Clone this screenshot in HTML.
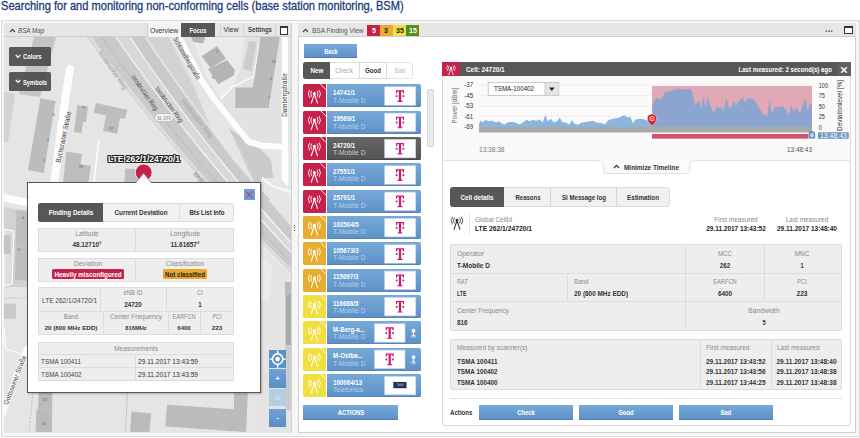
<!DOCTYPE html>
<html><head><meta charset="utf-8"><title>BSM</title>
<style>
html,body{margin:0;padding:0;background:#fff;}
body{position:relative;width:860px;height:438px;overflow:hidden;font-family:"Liberation Sans",sans-serif;}
.b{position:absolute;box-sizing:border-box;}
.t{position:absolute;display:inline-block;white-space:nowrap;line-height:10px;}
svg{position:absolute;overflow:visible;}
</style></head><body>

<span class="t" style="top:1.50px;font-size:13px;color:#1a3a7c;left:0.80px;transform-origin:0 50%;transform:scaleX(0.852);line-height:14px;top:-1px;-webkit-text-stroke:0.3px #1a3a7c;">Searching for and monitoring non-conforming cells (base station monitoring, BSM)</span>
<div class="b" style="left:1.00px;top:20.00px;width:858.50px;height:416.50px;background:#f6f6f6;border:1px solid #d9d9d9;"></div>
<div class="b" style="left:3.50px;top:22.50px;width:288.00px;height:410.00px;background:#e4e4e4;border:1px solid #d4d4d4;"></div>
<div class="b" style="left:4.00px;top:23.00px;width:287.00px;height:14.00px;background:#e6e6e6;border-bottom:1px solid #cfcfcf;"></div>
<svg style="left:4px;top:37px;overflow:hidden" width="287" height="395.5" viewBox="4 37 287 395.5">
<rect x="0" y="30" width="300" height="410" fill="#e5e5e5"/>
<polygon points="34.0,37.0 56.0,37.0 40.0,97.0 19.0,94.0" fill="#c4c4c4" />
<polygon points="4.0,92.0 15.0,94.0 8.0,142.0 4.0,142.0" fill="#d2d2d2" />
<polygon points="79.6,30.0 86.9,40.0 94.3,50.0 101.7,60.0 109.3,70.0 117.1,80.0 124.9,90.0 132.9,100.0 141.0,110.0 149.2,120.0 157.5,130.0 165.9,140.0 174.5,150.0 183.2,160.0 192.0,170.0 200.9,180.0 210.0,190.0 219.1,200.0 228.4,210.0 237.8,220.0 247.4,230.0 257.0,240.0 266.8,250.0 276.7,260.0 286.7,270.0 296.8,280.0 307.0,290.0 317.4,300.0 340.0,275.0 291.0,223.0 262.0,192.0 252.0,181.0 230.0,155.0 212.0,130.0 204.0,110.0 195.0,87.0 182.0,62.0 169.5,37.0 166.0,30.0" fill="#cacaca" />
<polygon points="79.6,30.0 86.9,40.0 94.3,50.0 101.7,60.0 109.3,70.0 117.1,80.0 124.9,90.0 132.9,100.0 141.0,110.0 149.2,120.0 157.5,130.0 165.9,140.0 174.5,150.0 183.2,160.0 192.0,170.0 200.9,180.0 210.0,190.0 219.1,200.0 228.4,210.0 237.8,220.0 247.4,230.0 257.0,240.0 266.8,250.0 276.7,260.0 286.7,270.0 296.8,280.0 307.0,290.0 317.4,300.0 322.3,300.0 312.0,290.0 301.8,280.0 291.7,270.0 281.7,260.0 271.9,250.0 262.2,240.0 252.6,230.0 243.1,220.0 233.8,210.0 224.5,200.0 215.4,190.0 206.4,180.0 197.5,170.0 188.8,160.0 180.1,150.0 171.6,140.0 163.2,130.0 155.0,120.0 146.8,110.0 138.8,100.0 130.9,90.0 123.1,80.0 115.4,70.0 107.8,60.0 100.4,50.0 93.1,40.0 85.9,30.0" fill="#d8d8d8" />
<polygon points="111.2,30.0 118.1,40.0 125.0,50.0 132.0,60.0 139.2,70.0 146.5,80.0 153.9,90.0 161.5,100.0 169.1,110.0 176.9,120.0 184.8,130.0 192.8,140.0 201.0,150.0 209.2,160.0 217.6,170.0 226.1,180.0 234.7,190.0 243.4,200.0 252.3,210.0 261.3,220.0 270.4,230.0 279.6,240.0 288.9,250.0 298.4,260.0 307.9,270.0 317.6,280.0 327.5,290.0 337.4,300.0 345.1,300.0 335.4,290.0 325.8,280.0 316.4,270.0 307.0,260.0 297.8,250.0 288.7,240.0 279.7,230.0 270.9,220.0 262.1,210.0 253.5,200.0 245.0,190.0 236.6,180.0 228.4,170.0 220.3,160.0 212.2,150.0 204.3,140.0 196.6,130.0 188.9,120.0 181.4,110.0 174.0,100.0 166.7,90.0 159.5,80.0 152.4,70.0 145.5,60.0 138.7,50.0 132.0,40.0 125.4,30.0" fill="#d8d8d8" />
<polygon points="140.7,30.0 147.3,40.0 154.0,50.0 160.9,60.0 167.9,70.0 175.0,80.0 182.2,90.0 189.5,100.0 197.0,110.0 204.5,120.0 212.2,130.0 220.1,140.0 228.0,150.0 236.0,160.0 244.2,170.0 252.5,180.0 260.9,190.0 269.5,200.0 278.1,210.0 286.9,220.0 295.8,230.0 304.8,240.0 314.0,250.0 323.2,260.0 332.6,270.0 342.1,280.0 351.7,290.0 361.4,300.0 340.0,275.0 291.0,223.0 262.0,192.0 252.0,181.0 230.0,155.0 212.0,130.0 204.0,110.0 195.0,87.0 182.0,62.0 169.5,37.0 166.0,30.0" fill="#d2d2d2" />
<polyline points="79.6,30.0 86.9,40.0 94.3,50.0 101.7,60.0 109.3,70.0 117.1,80.0 124.9,90.0 132.9,100.0 141.0,110.0 149.2,120.0 157.5,130.0 165.9,140.0 174.5,150.0 183.2,160.0 192.0,170.0 200.9,180.0 210.0,190.0 219.1,200.0 228.4,210.0 237.8,220.0 247.4,230.0 257.0,240.0 266.8,250.0 276.7,260.0 286.7,270.0 296.8,280.0 307.0,290.0 317.4,300.0" fill="none" stroke="#f4f4f4" stroke-width="1.6" />
<polyline points="79.6,30.0 86.9,40.0 94.3,50.0 101.7,60.0 109.3,70.0 117.1,80.0 124.9,90.0 132.9,100.0 141.0,110.0 149.2,120.0 157.5,130.0 165.9,140.0 174.5,150.0 183.2,160.0 192.0,170.0 200.9,180.0 210.0,190.0 219.1,200.0 228.4,210.0 237.8,220.0 247.4,230.0 257.0,240.0 266.8,250.0 276.7,260.0 286.7,270.0 296.8,280.0 307.0,290.0 317.4,300.0" fill="none" stroke="#999" stroke-width="0.5" stroke-dasharray="1 1.2"/>
<polyline points="85.9,30.0 93.1,40.0 100.4,50.0 107.8,60.0 115.4,70.0 123.1,80.0 130.9,90.0 138.8,100.0 146.8,110.0 155.0,120.0 163.2,130.0 171.6,140.0 180.1,150.0 188.8,160.0 197.5,170.0 206.4,180.0 215.4,190.0 224.5,200.0 233.8,210.0 243.1,220.0 252.6,230.0 262.2,240.0 271.9,250.0 281.7,260.0 291.7,270.0 301.8,280.0 312.0,290.0 322.3,300.0" fill="none" stroke="#eee" stroke-width="0.8" />
<polyline points="97.0,30.0 104.0,40.0 111.2,50.0 118.4,60.0 125.8,70.0 133.3,80.0 141.0,90.0 148.7,100.0 156.6,110.0 164.5,120.0 172.7,130.0 180.9,140.0 189.2,150.0 197.7,160.0 206.3,170.0 215.0,180.0 223.8,190.0 232.8,200.0 241.8,210.0 251.0,220.0 260.3,230.0 269.7,240.0 279.3,250.0 289.0,260.0 298.7,270.0 308.6,280.0 318.7,290.0 328.8,300.0" fill="none" stroke="#aaa" stroke-width="0.5" />
<polyline points="111.2,30.0 118.1,40.0 125.0,50.0 132.0,60.0 139.2,70.0 146.5,80.0 153.9,90.0 161.5,100.0 169.1,110.0 176.9,120.0 184.8,130.0 192.8,140.0 201.0,150.0 209.2,160.0 217.6,170.0 226.1,180.0 234.7,190.0 243.4,200.0 252.3,210.0 261.3,220.0 270.4,230.0 279.6,240.0 288.9,250.0 298.4,260.0 307.9,270.0 317.6,280.0 327.5,290.0 337.4,300.0" fill="none" stroke="#f6f6f6" stroke-width="1.2" />
<polyline points="125.4,30.0 132.0,40.0 138.7,50.0 145.5,60.0 152.4,70.0 159.5,80.0 166.7,90.0 174.0,100.0 181.4,110.0 188.9,120.0 196.6,130.0 204.3,140.0 212.2,150.0 220.3,160.0 228.4,170.0 236.6,180.0 245.0,190.0 253.5,200.0 262.1,210.0 270.9,220.0 279.7,230.0 288.7,240.0 297.8,250.0 307.0,260.0 316.4,270.0 325.8,280.0 335.4,290.0 345.1,300.0" fill="none" stroke="#f6f6f6" stroke-width="1.2" />
<polyline points="140.7,30.0 147.3,40.0 154.0,50.0 160.9,60.0 167.9,70.0 175.0,80.0 182.2,90.0 189.5,100.0 197.0,110.0 204.5,120.0 212.2,130.0 220.1,140.0 228.0,150.0 236.0,160.0 244.2,170.0 252.5,180.0 260.9,190.0 269.5,200.0 278.1,210.0 286.9,220.0 295.8,230.0 304.8,240.0 314.0,250.0 323.2,260.0 332.6,270.0 342.1,280.0 351.7,290.0 361.4,300.0" fill="none" stroke="#f4f4f4" stroke-width="1.4" />
<polyline points="140.7,30.0 147.3,40.0 154.0,50.0 160.9,60.0 167.9,70.0 175.0,80.0 182.2,90.0 189.5,100.0 197.0,110.0 204.5,120.0 212.2,130.0 220.1,140.0 228.0,150.0 236.0,160.0 244.2,170.0 252.5,180.0 260.9,190.0 269.5,200.0 278.1,210.0 286.9,220.0 295.8,230.0 304.8,240.0 314.0,250.0 323.2,260.0 332.6,270.0 342.1,280.0 351.7,290.0 361.4,300.0" fill="none" stroke="#999" stroke-width="0.5" stroke-dasharray="1 1.2"/>
<polyline points="166.0,30.0 169.5,37.0 182.0,62.0 195.0,87.0 204.0,110.0 212.0,130.0 230.0,155.0 252.0,181.0 262.0,192.0 291.0,223.0 340.0,275.0" fill="none" stroke="#f0f0f0" stroke-width="1.4" />
<polyline points="166.0,30.0 169.5,37.0 182.0,62.0 195.0,87.0 204.0,110.0 212.0,130.0 230.0,155.0 252.0,181.0 262.0,192.0 291.0,223.0 340.0,275.0" fill="none" stroke="#999" stroke-width="0.5" stroke-dasharray="1 1.2"/>
<polygon points="172.0,30.0 300.0,30.0 300.0,146.0 250.0,142.0 232.0,120.0 213.5,98.0 201.5,80.0 191.5,60.0" fill="#e2e2e2" />
<polygon points="192.0,37.0 245.0,37.0 240.0,70.0 232.0,88.0 221.0,99.0 205.0,75.0" fill="#ebebeb" />
<polygon points="229.0,128.0 249.0,142.0 260.0,148.4 271.0,160.0 276.0,200.0 262.0,200.0 254.0,182.0" fill="#cacaca" />
<polyline points="236.0,139.6 255.0,181.0" fill="none" stroke="#e2e2e2" stroke-width="0.7" stroke-dasharray="1 1"/>
<polyline points="177.0,30.0 180.0,37.0 191.5,60.0 201.5,80.0" fill="none" stroke="#fdfdfd" stroke-width="4.6" stroke-linejoin="round"/>
<polyline points="191.5,60.0 201.5,80.0 213.5,98.0 231.0,120.0 249.0,142.0 262.0,145.5 284.0,147.0" fill="none" stroke="#fdfdfd" stroke-width="6" stroke-linejoin="round"/>
<polyline points="285.0,30.0 285.0,186.0" fill="none" stroke="#fdfdfd" stroke-width="6.5" />
<polyline points="221.0,99.0 232.3,87.0 254.0,76.6 259.2,44.7 262.0,36.0" fill="none" stroke="#fff" stroke-width="1.2" />
<polygon points="191.4,37.0 205.5,37.0 203.0,43.4 193.0,42.0" fill="#b5b5b5" />
<polygon points="201.6,56.2 217.0,46.0 226.0,58.7 210.6,67.7" fill="#b5b5b5" />
<polygon points="208.0,69.0 227.2,60.0 234.9,70.3 233.6,75.4 218.3,84.3" fill="#b5b5b5" />
<polygon points="249.0,40.8 256.6,42.0 251.5,71.5 242.6,69.0" fill="#cdcdcd" />
<polygon points="260.5,37.0 279.8,37.0 268.7,108.0 235.3,108.0 235.3,87.4 252.9,87.4" fill="#b9b9b9" />
<polyline points="70.0,69.0 65.5,97.6 54.0,184.0" fill="none" stroke="#fdfdfd" stroke-width="8" stroke-linecap="round" stroke-linejoin="round"/>
<polyline points="99.0,139.0 94.0,182.0" fill="none" stroke="#fff" stroke-width="1.4" />
<polygon points="40.4,98.3 55.5,101.0 43.8,173.0 28.0,170.0" fill="#bcbcbc" />
<polygon points="77.5,105.0 88.0,106.5 86.0,122.0 83.0,122.0 81.5,133.0 74.0,132.0" fill="#bdbdbd" />
<polygon points="96.0,103.0 127.5,110.0 124.5,119.0 120.0,118.0 117.0,134.0 103.0,131.0 106.0,115.5 93.5,112.5" fill="#bdbdbd" />
<polygon points="66.5,151.5 82.0,154.0 80.5,164.0 91.0,166.0 88.5,182.0 63.0,182.0" fill="#bdbdbd" />
<polygon points="125.5,168.5 139.0,169.5 137.5,184.0 124.0,184.0" fill="#bdbdbd" />
<polygon points="4.0,207.0 27.0,211.0 27.0,287.0 4.0,287.0" fill="#d2d2d2" />
<polyline points="2.0,197.5 30.0,203.0" fill="none" stroke="#fdfdfd" stroke-width="7.5" />
<polygon points="16.4,210.0 27.0,211.0 27.0,281.0 15.0,279.0" fill="#bebebe" />
<polygon points="4.0,229.0 14.0,231.0 12.0,284.0 4.0,286.0" fill="#dedede" stroke="#fff" stroke-width="1"/>
<polygon points="4.0,235.0 11.0,235.5 10.5,254.0 4.0,254.0" fill="#c4c4c4" />
<polyline points="16.0,246.0 27.0,246.0" fill="none" stroke="#d0d0d0" stroke-width="0.6" />
<polyline points="4.0,298.0 27.0,298.0" fill="none" stroke="#aaa" stroke-width="0.6" stroke-dasharray="2 1.5"/>
<polygon points="4.0,303.7 16.0,303.7 16.0,318.8 4.0,318.8" fill="#c9c9c9" />
<polyline points="4.0,328.0 6.0,349.0 22.0,354.4 27.0,345.0" fill="none" stroke="#fff" stroke-width="1" />
<polyline points="27.5,347.0 24.4,355.8 6.8,401.8 -2.0,428.0" fill="none" stroke="#fdfdfd" stroke-width="5.8" />
<polyline points="33.0,393.0 29.0,432.0" fill="none" stroke="#999" stroke-width="0.5" stroke-dasharray="2 1.5"/>
<polygon points="38.5,393.0 52.3,393.0 52.0,432.0 35.5,432.0 36.5,409.5 38.0,409.5" fill="#bbbbbb" />
<polyline points="36.5,409.6 52.0,409.6" fill="none" stroke="#ccc" stroke-width="0.6" />
<polyline points="127.4,393.0 125.5,432.0" fill="none" stroke="#aaa" stroke-width="0.5" />
<polygon points="131.5,411.5 151.0,413.5 149.5,432.0 130.2,432.0" fill="#bbbbbb" />
<polygon points="167.0,404.8 234.0,409.3 234.0,393.0 247.8,393.0 246.0,432.0 230.6,431.0 165.2,426.5" fill="#bbbbbb" />
<polygon points="261.0,250.0 291.0,275.0 291.0,432.0 261.0,432.0" fill="#e4e4e4" />
<polygon points="261.0,257.0 272.0,266.0 270.0,300.0 261.0,300.0" fill="#ececec" />
<polygon points="285.0,282.0 291.0,282.0 291.0,295.0 285.0,295.0" fill="#bcbcbc" />
<polygon points="261.0,178.0 280.0,178.0 291.0,190.0 291.0,221.0 262.0,191.0" fill="#e6e6e6" />
<polyline points="262.0,178.0 272.0,186.0 291.0,192.0" fill="none" stroke="#f8f8f8" stroke-width="2.5" />
<polygon points="285.5,295.0 291.0,295.0 291.0,345.0 285.5,345.0" fill="#aaaaaa" />
<polygon points="285.5,345.0 291.0,345.0 291.0,410.0 285.5,410.0" fill="#cccccc" />
<text x="184.9" y="59.5" font-family="Liberation Sans, sans-serif" font-size="7" fill="#3a3a3a" text-anchor="middle" transform="rotate(59.7 184.9 59.5)" textLength="47.6" lengthAdjust="spacingAndGlyphs">Schlüsselbergstraße</text>
<text x="111.0" y="71.4" font-family="Liberation Sans, sans-serif" font-size="7" fill="#a4a4a4" text-anchor="middle" transform="rotate(55.7 111.0 71.4)" textLength="45.6" lengthAdjust="spacingAndGlyphs">Innsbrucker Ring</text>
<text x="142.8" y="93.9" font-family="Liberation Sans, sans-serif" font-size="7" fill="#4a4a4a" text-anchor="middle" transform="rotate(55 142.8 93.9)" textLength="41.8" lengthAdjust="spacingAndGlyphs">Innsbrucker Ring</text>
<text x="167.3" y="105.9" font-family="Liberation Sans, sans-serif" font-size="7" fill="#4a4a4a" text-anchor="middle" transform="rotate(53.9 167.3 105.9)" textLength="42.4" lengthAdjust="spacingAndGlyphs">Innsbrucker Ring</text>
<text x="195.1" y="119.7" font-family="Liberation Sans, sans-serif" font-size="7" fill="#a4a4a4" text-anchor="middle" transform="rotate(52.3 195.1 119.7)" textLength="47.6" lengthAdjust="spacingAndGlyphs">Innsbrucker Ring</text>
<text x="197.2" y="179.1" font-family="Liberation Sans, sans-serif" font-size="7" fill="#777" text-anchor="middle" transform="rotate(48 197.2 179.1)" textLength="13" lengthAdjust="spacingAndGlyphs">Innsb</text>
<text x="65.7" y="137.5" font-family="Liberation Sans, sans-serif" font-size="7" fill="#3a3a3a" text-anchor="middle" transform="rotate(-78 65.7 137.5)" textLength="52" lengthAdjust="spacingAndGlyphs">Buchsrainer Straße</text>
<text x="287.4" y="95.0" font-family="Liberation Sans, sans-serif" font-size="7" fill="#3a3a3a" text-anchor="middle" transform="rotate(-90 287.4 95.0)" textLength="43.5" lengthAdjust="spacingAndGlyphs">Dambergstraße</text>
<text x="17.1" y="380.9" font-family="Liberation Sans, sans-serif" font-size="7" fill="#3a3a3a" text-anchor="middle" transform="rotate(-69 17.1 380.9)" textLength="52" lengthAdjust="spacingAndGlyphs">Gottsseiner Straße</text>
<rect x="154.8" y="113.6" width="18.6" height="8" rx="4" fill="#f4f4f4" stroke="#aaa" stroke-width="0.6"/>
<text x="164.2" y="120.0" font-family="Liberation Sans, sans-serif" font-size="6" fill="#aaa" text-anchor="middle" transform="rotate(0 164.2 120.0)" font-weight="700">B 2R</text>
<text x="83.7" y="109.0" font-family="Liberation Sans, sans-serif" font-size="4.2" fill="#666" text-anchor="middle" transform="rotate(0 83.7 109.0)" >8</text>
<text x="111.0" y="130.0" font-family="Liberation Sans, sans-serif" font-size="4.2" fill="#666" text-anchor="middle" transform="rotate(0 111.0 130.0)" >37</text>
<text x="81.0" y="168.0" font-family="Liberation Sans, sans-serif" font-size="4.2" fill="#666" text-anchor="middle" transform="rotate(0 81.0 168.0)" >33</text>
<text x="53.5" y="116.0" font-family="Liberation Sans, sans-serif" font-size="4.2" fill="#666" text-anchor="middle" transform="rotate(0 53.5 116.0)" >5</text>
<text x="47.8" y="140.5" font-family="Liberation Sans, sans-serif" font-size="4.2" fill="#666" text-anchor="middle" transform="rotate(0 47.8 140.5)" >3</text>
<text x="43.8" y="162.0" font-family="Liberation Sans, sans-serif" font-size="4.2" fill="#666" text-anchor="middle" transform="rotate(0 43.8 162.0)" >1</text>
<text x="217.0" y="53.0" font-family="Liberation Sans, sans-serif" font-size="4.2" fill="#666" text-anchor="middle" transform="rotate(0 217.0 53.0)" >7</text>
<text x="213.0" y="79.0" font-family="Liberation Sans, sans-serif" font-size="4.2" fill="#666" text-anchor="middle" transform="rotate(0 213.0 79.0)" >9</text>
<text x="274.0" y="63.0" font-family="Liberation Sans, sans-serif" font-size="4.2" fill="#666" text-anchor="middle" transform="rotate(0 274.0 63.0)" >11</text>
<text x="271.0" y="80.0" font-family="Liberation Sans, sans-serif" font-size="4.2" fill="#666" text-anchor="middle" transform="rotate(0 271.0 80.0)" >9</text>
<text x="269.0" y="99.0" font-family="Liberation Sans, sans-serif" font-size="4.2" fill="#666" text-anchor="middle" transform="rotate(0 269.0 99.0)" >7</text>
<text x="44.5" y="400.5" font-family="Liberation Sans, sans-serif" font-size="4.2" fill="#666" text-anchor="middle" transform="rotate(0 44.5 400.5)" >13</text>
<text x="43.5" y="424.5" font-family="Liberation Sans, sans-serif" font-size="4.2" fill="#666" text-anchor="middle" transform="rotate(0 43.5 424.5)" >15</text>
<text x="19.0" y="251.0" font-family="Liberation Sans, sans-serif" font-size="4.2" fill="#666" text-anchor="middle" transform="rotate(0 19.0 251.0)" >6</text>
<text x="23.0" y="219.0" font-family="Liberation Sans, sans-serif" font-size="4.2" fill="#666" text-anchor="middle" transform="rotate(0 23.0 219.0)" >4</text>
</svg>
<svg style="left:8.8px;top:28px" width="7" height="5" viewBox="0 0 7 5"><path d="M1 4 L3.5 1.3 L6 4" fill="none" stroke="#444" stroke-width="1.2"/></svg>
<span class="t" style="top:26.00px;font-size:6.8px;color:#505050;left:17.80px;transform-origin:0 50%;transform:scaleX(0.917);font-style:italic;">BSA Map</span>
<div class="b" style="left:146.50px;top:23.00px;width:34.50px;height:14.00px;background:#f4f4f4;border-left:1px solid #ccc;"></div>
<span class="t" style="top:26.20px;font-size:7px;color:#333;left:163.70px;transform-origin:50% 50%;transform:translateX(-50%) scaleX(0.960);">Overview</span>
<div class="b" style="left:181.00px;top:23.00px;width:34.00px;height:14.00px;background:#575757;"></div>
<span class="t" style="top:26.20px;font-size:7px;color:#fff;font-weight:700;left:198.00px;transform-origin:50% 50%;transform:translateX(-50%) scaleX(0.825);">Focus</span>
<div class="b" style="left:220.00px;top:23.00px;width:24.00px;height:14.00px;border-left:1px solid #d2d2d2;border-right:1px solid #d2d2d2;"></div>
<span class="t" style="top:25.00px;font-size:7px;color:#333;left:230.50px;transform-origin:50% 50%;transform:translateX(-50%) scaleX(0.997);">View</span>
<div class="b" style="left:244.00px;top:23.00px;width:31.50px;height:14.00px;border-right:1px solid #d2d2d2;"></div>
<span class="t" style="top:25.00px;font-size:7px;color:#444;font-weight:700;left:260.00px;transform-origin:50% 50%;transform:translateX(-50%) scaleX(0.869);">Settings</span>
<div class="b" style="left:279.50px;top:26.00px;width:8.50px;height:8.50px;border:1px solid #333;border-top:2.5px solid #333;background:#fff;"></div>
<div class="b" style="left:9.00px;top:47.00px;width:41.50px;height:19.00px;background:rgba(70,70,70,0.88);border-radius:1.5px;"></div>
<svg style="left:14.5px;top:54.0px" width="6" height="5" viewBox="0 0 6 5"><path d="M0.8 1 L3 3.4 L5.2 1" fill="none" stroke="#fff" stroke-width="1.2"/></svg>
<span class="t" style="top:52.40px;font-size:7px;color:#fff;font-weight:700;left:23.00px;transform-origin:0 50%;transform:scaleX(0.835);">Colors</span>
<div class="b" style="left:9.00px;top:72.30px;width:41.50px;height:19.00px;background:rgba(70,70,70,0.88);border-radius:1.5px;"></div>
<svg style="left:14.5px;top:79.3px" width="6" height="5" viewBox="0 0 6 5"><path d="M0.8 1 L3 3.4 L5.2 1" fill="none" stroke="#fff" stroke-width="1.2"/></svg>
<span class="t" style="top:77.70px;font-size:7px;color:#fff;font-weight:700;left:23.00px;transform-origin:0 50%;transform:scaleX(0.823);">Symbols</span>
<svg style="left:0;top:0" width="860" height="438" viewBox="0 0 860 438"><circle cx="143.7" cy="172.5" r="8.4" fill="#c5214b" stroke="#fff" stroke-width="0.8"/></svg>
<span class="t" style="top:154.30px;font-size:8.5px;color:#fff;font-weight:700;left:144.00px;transform-origin:50% 50%;transform:translateX(-50%) scaleX(0.998);text-shadow:-1px 0 #222,1px 0 #222,0 -1px #222,0 1px #222,-1px -1px #222,1px 1px #222,1px -1px #222,-1px 1px #222;">LTE 262/1/24720/1</span>
<div class="b" style="left:27.00px;top:182.30px;width:234.00px;height:210.70px;background:#fff;border:1px solid #555;box-shadow:1px 1px 2px rgba(0,0,0,.25);"></div>
<svg style="left:0;top:0" width="860" height="438" viewBox="0 0 860 438"><path d="M135.5 183.6 L143.7 173.2 L151.5 183.6 Z" fill="#fff"/><path d="M135.5 183 L143.7 173.2 L151.5 183" fill="none" stroke="#777" stroke-width="0.7"/></svg>
<div class="b" style="left:244.30px;top:188.60px;width:10.50px;height:11.20px;background:#6d9fd6;"></div>
<svg style="left:244.3px;top:188.6px" width="10.5" height="11.2" viewBox="0 0 10.5 11.2"><path d="M2 2.4 L8.5 8.9 M8.5 2.4 L2 8.9" stroke="#b8405e" stroke-width="1.1"/></svg>
<div class="b" style="left:38.20px;top:202.80px;width:195.80px;height:19.00px;background:#f1f1f1;border:1px solid #ddd;border-radius:2.5px;"></div>
<div class="b" style="left:38.20px;top:202.80px;width:65.30px;height:19.00px;background:#575757;border-radius:2.5px 0 0 2.5px;"></div>
<div class="b" style="left:178.80px;top:202.80px;width:0.70px;height:19.00px;background:#ddd;"></div>
<span class="t" style="top:207.50px;font-size:7px;color:#fff;font-weight:700;left:71.00px;transform-origin:50% 50%;transform:translateX(-50%) scaleX(0.887);">Finding Details</span>
<span class="t" style="top:207.50px;font-size:7px;color:#333;font-weight:700;left:141.00px;transform-origin:50% 50%;transform:translateX(-50%) scaleX(0.902);">Current Deviation</span>
<span class="t" style="top:207.50px;font-size:7px;color:#333;font-weight:700;left:206.50px;transform-origin:50% 50%;transform:translateX(-50%) scaleX(0.866);">Bts List Info</span>
<div class="b" style="left:38.20px;top:228.30px;width:195.80px;height:24.00px;background:#eeeeee;border:1px solid #dcdcdc;"></div>
<div class="b" style="left:135.00px;top:228.30px;width:0.70px;height:24.00px;background:#dcdcdc;"></div>
<span class="t" style="top:229.30px;font-size:6.5px;color:#8a8a8a;left:87.00px;transform-origin:50% 50%;transform:translateX(-50%) scaleX(1.016);">Latitude</span>
<span class="t" style="top:240.00px;font-size:6.5px;color:#333;font-weight:700;left:87.00px;transform-origin:50% 50%;transform:translateX(-50%) scaleX(0.976);">48.12710°</span>
<span class="t" style="top:229.30px;font-size:6.5px;color:#8a8a8a;left:184.50px;transform-origin:50% 50%;transform:translateX(-50%) scaleX(1.051);">Longitude</span>
<span class="t" style="top:240.00px;font-size:6.5px;color:#333;font-weight:700;left:184.50px;transform-origin:50% 50%;transform:translateX(-50%) scaleX(0.988);">11.61657°</span>
<div class="b" style="left:38.20px;top:257.70px;width:195.80px;height:24.50px;background:#eeeeee;border:1px solid #dcdcdc;"></div>
<div class="b" style="left:135.00px;top:257.70px;width:0.70px;height:24.50px;background:#dcdcdc;"></div>
<span class="t" style="top:258.80px;font-size:7px;color:#8a8a8a;left:87.80px;transform-origin:50% 50%;transform:translateX(-50%) scaleX(0.977);">Deviation</span>
<span class="t" style="top:258.80px;font-size:7px;color:#8a8a8a;left:184.50px;transform-origin:50% 50%;transform:translateX(-50%) scaleX(0.934);">Classification</span>
<div class="b" style="left:52.30px;top:269.20px;width:71.40px;height:10.20px;background:#c5214b;border-radius:1.5px;"></div>
<span class="t" style="top:269.50px;font-size:7px;color:#fff;font-weight:700;left:88.00px;transform-origin:50% 50%;transform:translateX(-50%) scaleX(0.897);">Heavily misconfigured</span>
<div class="b" style="left:162.80px;top:269.20px;width:43.90px;height:10.20px;background:#e8a92a;border-radius:1.5px;"></div>
<span class="t" style="top:269.50px;font-size:7px;color:#222;font-weight:700;left:184.80px;transform-origin:50% 50%;transform:translateX(-50%) scaleX(0.879);">Not classified</span>
<div class="b" style="left:38.20px;top:287.00px;width:195.80px;height:48.30px;background:#eeeeee;border:1px solid #dcdcdc;"></div>
<div class="b" style="left:38.20px;top:311.00px;width:195.80px;height:0.70px;background:#dcdcdc;"></div>
<div class="b" style="left:99.50px;top:287.00px;width:0.70px;height:24.00px;background:#dcdcdc;"></div>
<div class="b" style="left:166.00px;top:287.00px;width:0.70px;height:24.00px;background:#dcdcdc;"></div>
<div class="b" style="left:103.30px;top:311.50px;width:0.70px;height:23.80px;background:#dcdcdc;"></div>
<div class="b" style="left:168.20px;top:311.50px;width:0.70px;height:23.80px;background:#dcdcdc;"></div>
<div class="b" style="left:200.00px;top:311.50px;width:0.70px;height:23.80px;background:#dcdcdc;"></div>
<span class="t" style="top:295.50px;font-size:6.5px;color:#444;left:41.50px;transform-origin:0 50%;transform:scaleX(1.004);">LTE 262/1/24720/1</span>
<span class="t" style="top:288.30px;font-size:6.5px;color:#8a8a8a;left:133.00px;transform-origin:50% 50%;transform:translateX(-50%) scaleX(0.907);">eNB ID</span>
<span class="t" style="top:299.50px;font-size:7px;color:#333;font-weight:700;left:133.00px;transform-origin:50% 50%;transform:translateX(-50%) scaleX(0.899);">24720</span>
<span class="t" style="top:288.30px;font-size:6.5px;color:#8a8a8a;left:200.00px;transform-origin:50% 50%;transform:translateX(-50%) scaleX(0.846);">CI</span>
<span class="t" style="top:299.50px;font-size:7px;color:#333;font-weight:700;left:200.00px;transform-origin:50% 50%;transform:translateX(-50%) scaleX(0.880);">1</span>
<span class="t" style="top:311.80px;font-size:6.5px;color:#8a8a8a;left:71.00px;transform-origin:50% 50%;transform:translateX(-50%) scaleX(0.955);">Band</span>
<span class="t" style="top:323.00px;font-size:6.2px;color:#333;font-weight:700;left:71.00px;transform-origin:50% 50%;transform:translateX(-50%) scaleX(1.012);">20 (800 MHz EDD)</span>
<span class="t" style="top:311.80px;font-size:6.5px;color:#8a8a8a;left:136.00px;transform-origin:50% 50%;transform:translateX(-50%) scaleX(1.000);">Center Frequency</span>
<span class="t" style="top:323.00px;font-size:6.2px;color:#333;font-weight:700;left:136.00px;transform-origin:50% 50%;transform:translateX(-50%) scaleX(0.931);">816MHz</span>
<span class="t" style="top:311.80px;font-size:6.5px;color:#8a8a8a;left:184.00px;transform-origin:50% 50%;transform:translateX(-50%) scaleX(0.861);">EARFCN</span>
<span class="t" style="top:323.00px;font-size:6.2px;color:#333;font-weight:700;left:184.00px;transform-origin:50% 50%;transform:translateX(-50%) scaleX(0.979);">6400</span>
<span class="t" style="top:311.80px;font-size:6.5px;color:#8a8a8a;left:217.00px;transform-origin:50% 50%;transform:translateX(-50%) scaleX(0.831);">PCI</span>
<span class="t" style="top:323.00px;font-size:6.2px;color:#333;font-weight:700;left:217.00px;transform-origin:50% 50%;transform:translateX(-50%) scaleX(1.015);">223</span>
<div class="b" style="left:38.20px;top:341.80px;width:195.80px;height:39.20px;background:#eeeeee;border:1px solid #dcdcdc;"></div>
<div class="b" style="left:38.20px;top:354.30px;width:195.80px;height:0.70px;background:#dcdcdc;"></div>
<div class="b" style="left:38.20px;top:367.30px;width:195.80px;height:0.70px;background:#dcdcdc;"></div>
<div class="b" style="left:135.00px;top:354.30px;width:0.70px;height:26.70px;background:#dcdcdc;"></div>
<span class="t" style="top:344.10px;font-size:6.5px;color:#8a8a8a;left:136.00px;transform-origin:50% 50%;transform:translateX(-50%) scaleX(1.024);">Measurements</span>
<span class="t" style="top:356.90px;font-size:6.8px;color:#444;left:41.00px;transform-origin:0 50%;transform:scaleX(0.939);">TSMA 100411</span>
<span class="t" style="top:369.90px;font-size:6.8px;color:#444;left:41.00px;transform-origin:0 50%;transform:scaleX(0.940);">TSMA 100402</span>
<span class="t" style="top:356.90px;font-size:6.8px;color:#333;left:138.00px;transform-origin:0 50%;transform:scaleX(0.970);">29.11.2017 13:43:59</span>
<span class="t" style="top:369.90px;font-size:6.8px;color:#333;left:138.00px;transform-origin:0 50%;transform:scaleX(0.970);">29.11.2017 13:43:59</span>
<div class="b" style="left:268.80px;top:350.00px;width:17.60px;height:18.40px;background:#5d91cc;"></div>
<svg style="left:269px;top:350px" width="17.3" height="18.2" viewBox="0 0 17.3 18.2"><circle cx="8.65" cy="9.1" r="5.2" fill="none" stroke="#fff" stroke-width="1.7"/><circle cx="8.65" cy="9.1" r="2.3" fill="#fff"/><path d="M8.65 0.5V4 M8.65 14.2V17.7 M0.5 9.1H3.6 M13.7 9.1H16.8" stroke="#fff" stroke-width="1.4"/></svg>
<div class="b" style="left:268.80px;top:369.40px;width:17.60px;height:18.60px;background:linear-gradient(#6fa2d6,#5a8dc6);"></div>
<span class="t" style="top:374.00px;font-size:7px;color:#fff;font-weight:700;left:277.60px;transform-origin:50% 50%;transform:translateX(-50%) scaleX(1.000);">+</span>
<div class="b" style="left:268.80px;top:388.80px;width:17.60px;height:17.40px;background:#b4cde3;"></div>
<span class="t" style="top:392.80px;font-size:5px;color:#e4eef7;left:277.60px;transform-origin:50% 50%;transform:translateX(-50%) scaleX(1.000);">10</span>
<div class="b" style="left:268.80px;top:408.80px;width:17.60px;height:18.20px;background:linear-gradient(#6fa2d6,#5a8dc6);"></div>
<span class="t" style="top:412.50px;font-size:8px;color:#fff;font-weight:700;left:277.60px;transform-origin:50% 50%;transform:translateX(-50%) scaleX(1.000);">-</span>
<div class="b" style="left:294.00px;top:224.50px;width:1.00px;height:1.00px;background:#555;"></div>
<div class="b" style="left:294.00px;top:227.00px;width:1.00px;height:1.00px;background:#555;"></div>
<div class="b" style="left:294.00px;top:229.50px;width:1.00px;height:1.00px;background:#555;"></div>
<div class="b" style="left:297.50px;top:22.50px;width:558.50px;height:410.00px;background:#fff;border:1px solid #d0d0d0;"></div>
<div class="b" style="left:298.00px;top:23.00px;width:557.50px;height:14.00px;background:#e6e6e6;border-bottom:1px solid #cfcfcf;"></div>
<svg style="left:302.3px;top:28px" width="7" height="5" viewBox="0 0 7 5"><path d="M1 4 L3.5 1.3 L6 4" fill="none" stroke="#444" stroke-width="1.2"/></svg>
<span class="t" style="top:25.50px;font-size:6.8px;color:#555;left:311.50px;transform-origin:0 50%;transform:scaleX(0.955);">BSA Finding View</span>
<div class="b" style="left:367.20px;top:25.00px;width:12.60px;height:11.00px;background:#c5214b;"></div>
<span class="t" style="top:25.70px;font-size:8px;color:#fff;font-weight:700;left:373.50px;transform-origin:50% 50%;transform:translateX(-50%) scaleX(0.880);">5</span>
<div class="b" style="left:379.80px;top:25.00px;width:13.00px;height:11.00px;background:#e8ad2e;"></div>
<span class="t" style="top:25.70px;font-size:8px;color:#222;font-weight:700;left:386.30px;transform-origin:50% 50%;transform:translateX(-50%) scaleX(0.880);">3</span>
<div class="b" style="left:392.80px;top:25.00px;width:13.40px;height:11.00px;background:#f1df3f;"></div>
<span class="t" style="top:25.70px;font-size:8px;color:#222;font-weight:700;left:399.50px;transform-origin:50% 50%;transform:translateX(-50%) scaleX(0.880);">35</span>
<div class="b" style="left:406.20px;top:25.00px;width:13.30px;height:11.00px;background:#528f17;"></div>
<span class="t" style="top:25.70px;font-size:8px;color:#fff;font-weight:700;left:412.85px;transform-origin:50% 50%;transform:translateX(-50%) scaleX(0.880);">15</span>
<span class="t" style="top:24.30px;font-size:10px;color:#666;font-weight:700;left:828.50px;transform-origin:50% 50%;transform:translateX(-50%) scaleX(0.950);">...</span>
<div class="b" style="left:844.30px;top:26.00px;width:8.70px;height:8.30px;border:1px solid #333;border-top:2.5px solid #333;background:#fff;"></div>
<div class="b" style="left:304.00px;top:44.20px;width:53.00px;height:14.20px;background:linear-gradient(#77a9d8,#5e92c7);border-bottom:1px solid #4f7fb3;"></div>
<span class="t" style="top:46.50px;font-size:6.5px;color:#fff;font-weight:700;left:330.50px;transform-origin:50% 50%;transform:translateX(-50%) scaleX(0.869);">Back</span>
<div class="b" style="left:303.40px;top:62.30px;width:109.80px;height:16.40px;background:#fff;border:1px solid #e2e2e2;border-radius:2.5px;"></div>
<div class="b" style="left:303.40px;top:62.30px;width:26.60px;height:16.40px;background:#575757;border-radius:2.5px 0 0 2.5px;"></div>
<div class="b" style="left:358.50px;top:62.30px;width:28.30px;height:16.40px;background:#fff;border:1px solid #dadada;"></div>
<span class="t" style="top:65.60px;font-size:6.8px;color:#fff;font-weight:700;left:316.80px;transform-origin:50% 50%;transform:translateX(-50%) scaleX(0.930);">New</span>
<span class="t" style="top:65.60px;font-size:6.8px;color:#aaa;left:344.30px;transform-origin:50% 50%;transform:translateX(-50%) scaleX(0.908);">Check</span>
<span class="t" style="top:65.60px;font-size:6.8px;color:#333;font-weight:700;left:372.70px;transform-origin:50% 50%;transform:translateX(-50%) scaleX(0.901);">Good</span>
<span class="t" style="top:65.60px;font-size:6.8px;color:#bbb;left:399.50px;transform-origin:50% 50%;transform:translateX(-50%) scaleX(0.868);">Bad</span>
<div class="b" style="left:303.20px;top:84.30px;width:22.80px;height:23.20px;background:#c5214b;border-radius:1.5px 0 0 1.5px;"></div>
<div class="b" style="left:327.00px;top:84.30px;width:94.00px;height:23.20px;background:linear-gradient(#77a9d8,#5e92c7);border-radius:0 1.5px 1.5px 0;border-bottom:1px solid #5585bb;"></div>
<svg style="left:0;top:0" width="860" height="438" viewBox="0 0 860 438"><path d="M320.5 84.3 L326.0 89.8" stroke="#fff" stroke-width="1" opacity="0.9"/><g transform="translate(314.4 96.80)"><g fill="none" stroke="#fff" stroke-linecap="round"><path d="M-0.2 -2.2 L-3.1 6.3 M0.2 -2.2 L3.1 6.3" stroke-width="1.1"/><path d="M-2.9 -5.6 Q-4.6 -3 -2.9 -0.3 M2.9 -5.6 Q4.6 -3 2.9 -0.3" stroke-width="0.9"/><path d="M-4.9 -6.6 Q-7.4 -3 -4.9 0.8 M4.9 -6.6 Q7.4 -3 4.9 0.8" stroke-width="0.9"/></g><circle cx="0" cy="-3.2" r="1.5" fill="#fff"/></g><rect x="384.7" y="86.80" width="31" height="18.4" fill="#fff" stroke="#c9d6e4" stroke-width="0.6"/><g transform="translate(400 96.10)"><g><path d="M-4 -5.8 H4 V-2.6 H3.2 Q3 -4.9 1.1 -4.9 V4.2 Q1.1 5 2.6 5 V5.8 H-2.6 V5 Q-1.1 5 -1.1 4.2 V-4.9 Q-3 -4.9 -3.2 -2.6 H-4 Z" fill="#e10a7a"/><rect x="-4.3" y="-0.9" width="1.9" height="1.9" fill="#666"/><rect x="2.4" y="-0.9" width="1.9" height="1.9" fill="#666"/></g></g></svg>
<span class="t" style="top:87.90px;font-size:7px;color:#fff;font-weight:700;left:332.50px;transform-origin:0 50%;transform:scaleX(0.880);">14741/1</span>
<span class="t" style="top:95.50px;font-size:7px;color:#b5d2ee;left:332.50px;transform-origin:0 50%;transform:scaleX(0.960);">T-Mobile D</span>
<div class="b" style="left:303.20px;top:110.63px;width:22.80px;height:23.20px;background:#c5214b;border-radius:1.5px 0 0 1.5px;"></div>
<div class="b" style="left:327.00px;top:110.63px;width:94.00px;height:23.20px;background:linear-gradient(#77a9d8,#5e92c7);border-radius:0 1.5px 1.5px 0;border-bottom:1px solid #5585bb;"></div>
<svg style="left:0;top:0" width="860" height="438" viewBox="0 0 860 438"><path d="M320.5 110.6 L326.0 116.1" stroke="#fff" stroke-width="1" opacity="0.9"/><g transform="translate(314.4 123.13)"><g fill="none" stroke="#fff" stroke-linecap="round"><path d="M-0.2 -2.2 L-3.1 6.3 M0.2 -2.2 L3.1 6.3" stroke-width="1.1"/><path d="M-2.9 -5.6 Q-4.6 -3 -2.9 -0.3 M2.9 -5.6 Q4.6 -3 2.9 -0.3" stroke-width="0.9"/><path d="M-4.9 -6.6 Q-7.4 -3 -4.9 0.8 M4.9 -6.6 Q7.4 -3 4.9 0.8" stroke-width="0.9"/></g><circle cx="0" cy="-3.2" r="1.5" fill="#fff"/></g><rect x="384.7" y="113.13" width="31" height="18.4" fill="#fff" stroke="#c9d6e4" stroke-width="0.6"/><g transform="translate(400 122.43)"><g><path d="M-4 -5.8 H4 V-2.6 H3.2 Q3 -4.9 1.1 -4.9 V4.2 Q1.1 5 2.6 5 V5.8 H-2.6 V5 Q-1.1 5 -1.1 4.2 V-4.9 Q-3 -4.9 -3.2 -2.6 H-4 Z" fill="#e10a7a"/><rect x="-4.3" y="-0.9" width="1.9" height="1.9" fill="#666"/><rect x="2.4" y="-0.9" width="1.9" height="1.9" fill="#666"/></g></g></svg>
<span class="t" style="top:114.23px;font-size:7px;color:#fff;font-weight:700;left:332.50px;transform-origin:0 50%;transform:scaleX(0.880);">19569/1</span>
<span class="t" style="top:121.83px;font-size:7px;color:#b5d2ee;left:332.50px;transform-origin:0 50%;transform:scaleX(0.960);">T-Mobile D</span>
<div class="b" style="left:303.20px;top:136.96px;width:22.80px;height:23.20px;background:#c5214b;border-radius:1.5px 0 0 1.5px;"></div>
<div class="b" style="left:327.00px;top:136.96px;width:94.00px;height:23.20px;background:linear-gradient(#666,#545454);border-radius:0 1.5px 1.5px 0;border-bottom:1px solid #444;"></div>
<svg style="left:0;top:0" width="860" height="438" viewBox="0 0 860 438"><path d="M320.5 137.0 L326.0 142.5" stroke="#fff" stroke-width="1" opacity="0.9"/><g transform="translate(314.4 149.46)"><g fill="none" stroke="#fff" stroke-linecap="round"><path d="M-0.2 -2.2 L-3.1 6.3 M0.2 -2.2 L3.1 6.3" stroke-width="1.1"/><path d="M-2.9 -5.6 Q-4.6 -3 -2.9 -0.3 M2.9 -5.6 Q4.6 -3 2.9 -0.3" stroke-width="0.9"/><path d="M-4.9 -6.6 Q-7.4 -3 -4.9 0.8 M4.9 -6.6 Q7.4 -3 4.9 0.8" stroke-width="0.9"/></g><circle cx="0" cy="-3.2" r="1.5" fill="#fff"/></g><rect x="384.7" y="139.46" width="31" height="18.4" fill="#fff" stroke="#c9d6e4" stroke-width="0.6"/><g transform="translate(400 148.76)"><g><path d="M-4 -5.8 H4 V-2.6 H3.2 Q3 -4.9 1.1 -4.9 V4.2 Q1.1 5 2.6 5 V5.8 H-2.6 V5 Q-1.1 5 -1.1 4.2 V-4.9 Q-3 -4.9 -3.2 -2.6 H-4 Z" fill="#e10a7a"/><rect x="-4.3" y="-0.9" width="1.9" height="1.9" fill="#666"/><rect x="2.4" y="-0.9" width="1.9" height="1.9" fill="#666"/></g></g></svg>
<span class="t" style="top:140.56px;font-size:7px;color:#fff;font-weight:700;left:332.50px;transform-origin:0 50%;transform:scaleX(0.880);">24720/1</span>
<span class="t" style="top:148.16px;font-size:7px;color:#c9c9c9;left:332.50px;transform-origin:0 50%;transform:scaleX(0.960);">T-Mobile D</span>
<div class="b" style="left:303.20px;top:163.29px;width:22.80px;height:23.20px;background:#c5214b;border-radius:1.5px 0 0 1.5px;"></div>
<div class="b" style="left:327.00px;top:163.29px;width:94.00px;height:23.20px;background:linear-gradient(#77a9d8,#5e92c7);border-radius:0 1.5px 1.5px 0;border-bottom:1px solid #5585bb;"></div>
<svg style="left:0;top:0" width="860" height="438" viewBox="0 0 860 438"><path d="M320.5 163.3 L326.0 168.8" stroke="#fff" stroke-width="1" opacity="0.9"/><g transform="translate(314.4 175.79)"><g fill="none" stroke="#fff" stroke-linecap="round"><path d="M-0.2 -2.2 L-3.1 6.3 M0.2 -2.2 L3.1 6.3" stroke-width="1.1"/><path d="M-2.9 -5.6 Q-4.6 -3 -2.9 -0.3 M2.9 -5.6 Q4.6 -3 2.9 -0.3" stroke-width="0.9"/><path d="M-4.9 -6.6 Q-7.4 -3 -4.9 0.8 M4.9 -6.6 Q7.4 -3 4.9 0.8" stroke-width="0.9"/></g><circle cx="0" cy="-3.2" r="1.5" fill="#fff"/></g><rect x="384.7" y="165.79" width="31" height="18.4" fill="#fff" stroke="#c9d6e4" stroke-width="0.6"/><g transform="translate(400 175.09)"><g><path d="M-4 -5.8 H4 V-2.6 H3.2 Q3 -4.9 1.1 -4.9 V4.2 Q1.1 5 2.6 5 V5.8 H-2.6 V5 Q-1.1 5 -1.1 4.2 V-4.9 Q-3 -4.9 -3.2 -2.6 H-4 Z" fill="#e10a7a"/><rect x="-4.3" y="-0.9" width="1.9" height="1.9" fill="#666"/><rect x="2.4" y="-0.9" width="1.9" height="1.9" fill="#666"/></g></g></svg>
<span class="t" style="top:166.89px;font-size:7px;color:#fff;font-weight:700;left:332.50px;transform-origin:0 50%;transform:scaleX(0.880);">27551/1</span>
<span class="t" style="top:174.49px;font-size:7px;color:#b5d2ee;left:332.50px;transform-origin:0 50%;transform:scaleX(0.960);">T-Mobile D</span>
<div class="b" style="left:303.20px;top:189.62px;width:22.80px;height:23.20px;background:#c5214b;border-radius:1.5px 0 0 1.5px;"></div>
<div class="b" style="left:327.00px;top:189.62px;width:94.00px;height:23.20px;background:linear-gradient(#77a9d8,#5e92c7);border-radius:0 1.5px 1.5px 0;border-bottom:1px solid #5585bb;"></div>
<svg style="left:0;top:0" width="860" height="438" viewBox="0 0 860 438"><path d="M320.5 189.6 L326.0 195.1" stroke="#fff" stroke-width="1" opacity="0.9"/><g transform="translate(314.4 202.12)"><g fill="none" stroke="#fff" stroke-linecap="round"><path d="M-0.2 -2.2 L-3.1 6.3 M0.2 -2.2 L3.1 6.3" stroke-width="1.1"/><path d="M-2.9 -5.6 Q-4.6 -3 -2.9 -0.3 M2.9 -5.6 Q4.6 -3 2.9 -0.3" stroke-width="0.9"/><path d="M-4.9 -6.6 Q-7.4 -3 -4.9 0.8 M4.9 -6.6 Q7.4 -3 4.9 0.8" stroke-width="0.9"/></g><circle cx="0" cy="-3.2" r="1.5" fill="#fff"/></g><rect x="384.7" y="192.12" width="31" height="18.4" fill="#fff" stroke="#c9d6e4" stroke-width="0.6"/><g transform="translate(400 201.42)"><g><path d="M-4 -5.8 H4 V-2.6 H3.2 Q3 -4.9 1.1 -4.9 V4.2 Q1.1 5 2.6 5 V5.8 H-2.6 V5 Q-1.1 5 -1.1 4.2 V-4.9 Q-3 -4.9 -3.2 -2.6 H-4 Z" fill="#e10a7a"/><rect x="-4.3" y="-0.9" width="1.9" height="1.9" fill="#666"/><rect x="2.4" y="-0.9" width="1.9" height="1.9" fill="#666"/></g></g></svg>
<span class="t" style="top:193.22px;font-size:7px;color:#fff;font-weight:700;left:332.50px;transform-origin:0 50%;transform:scaleX(0.880);">25791/1</span>
<span class="t" style="top:200.82px;font-size:7px;color:#b5d2ee;left:332.50px;transform-origin:0 50%;transform:scaleX(0.960);">T-Mobile D</span>
<div class="b" style="left:303.20px;top:215.95px;width:22.80px;height:23.20px;background:#e8ad2e;border-radius:1.5px 0 0 1.5px;"></div>
<div class="b" style="left:327.00px;top:215.95px;width:94.00px;height:23.20px;background:linear-gradient(#77a9d8,#5e92c7);border-radius:0 1.5px 1.5px 0;border-bottom:1px solid #5585bb;"></div>
<svg style="left:0;top:0" width="860" height="438" viewBox="0 0 860 438"><path d="M320.5 215.9 L326.0 221.4" stroke="#fff" stroke-width="1" opacity="0.9"/><g transform="translate(314.4 228.45)"><g fill="none" stroke="#fff" stroke-linecap="round"><path d="M-0.2 -2.2 L-3.1 6.3 M0.2 -2.2 L3.1 6.3" stroke-width="1.1"/><path d="M-2.9 -5.6 Q-4.6 -3 -2.9 -0.3 M2.9 -5.6 Q4.6 -3 2.9 -0.3" stroke-width="0.9"/><path d="M-4.9 -6.6 Q-7.4 -3 -4.9 0.8 M4.9 -6.6 Q7.4 -3 4.9 0.8" stroke-width="0.9"/></g><circle cx="0" cy="-3.2" r="1.5" fill="#fff"/></g><rect x="384.7" y="218.45" width="31" height="18.4" fill="#fff" stroke="#c9d6e4" stroke-width="0.6"/><g transform="translate(400 227.75)"><g><path d="M-4 -5.8 H4 V-2.6 H3.2 Q3 -4.9 1.1 -4.9 V4.2 Q1.1 5 2.6 5 V5.8 H-2.6 V5 Q-1.1 5 -1.1 4.2 V-4.9 Q-3 -4.9 -3.2 -2.6 H-4 Z" fill="#e10a7a"/><rect x="-4.3" y="-0.9" width="1.9" height="1.9" fill="#666"/><rect x="2.4" y="-0.9" width="1.9" height="1.9" fill="#666"/></g></g></svg>
<span class="t" style="top:219.55px;font-size:7px;color:#fff;font-weight:700;left:332.50px;transform-origin:0 50%;transform:scaleX(0.880);">103504/5</span>
<span class="t" style="top:227.15px;font-size:7px;color:#b5d2ee;left:332.50px;transform-origin:0 50%;transform:scaleX(0.960);">T-Mobile D</span>
<div class="b" style="left:303.20px;top:242.28px;width:22.80px;height:23.20px;background:#e8ad2e;border-radius:1.5px 0 0 1.5px;"></div>
<div class="b" style="left:327.00px;top:242.28px;width:94.00px;height:23.20px;background:linear-gradient(#77a9d8,#5e92c7);border-radius:0 1.5px 1.5px 0;border-bottom:1px solid #5585bb;"></div>
<svg style="left:0;top:0" width="860" height="438" viewBox="0 0 860 438"><path d="M320.5 242.3 L326.0 247.8" stroke="#fff" stroke-width="1" opacity="0.9"/><g transform="translate(314.4 254.78)"><g fill="none" stroke="#fff" stroke-linecap="round"><path d="M-0.2 -2.2 L-3.1 6.3 M0.2 -2.2 L3.1 6.3" stroke-width="1.1"/><path d="M-2.9 -5.6 Q-4.6 -3 -2.9 -0.3 M2.9 -5.6 Q4.6 -3 2.9 -0.3" stroke-width="0.9"/><path d="M-4.9 -6.6 Q-7.4 -3 -4.9 0.8 M4.9 -6.6 Q7.4 -3 4.9 0.8" stroke-width="0.9"/></g><circle cx="0" cy="-3.2" r="1.5" fill="#fff"/></g><rect x="384.7" y="244.78" width="31" height="18.4" fill="#fff" stroke="#c9d6e4" stroke-width="0.6"/><g transform="translate(400 254.08)"><g><path d="M-4 -5.8 H4 V-2.6 H3.2 Q3 -4.9 1.1 -4.9 V4.2 Q1.1 5 2.6 5 V5.8 H-2.6 V5 Q-1.1 5 -1.1 4.2 V-4.9 Q-3 -4.9 -3.2 -2.6 H-4 Z" fill="#e10a7a"/><rect x="-4.3" y="-0.9" width="1.9" height="1.9" fill="#666"/><rect x="2.4" y="-0.9" width="1.9" height="1.9" fill="#666"/></g></g></svg>
<span class="t" style="top:245.88px;font-size:7px;color:#fff;font-weight:700;left:332.50px;transform-origin:0 50%;transform:scaleX(0.880);">105673/3</span>
<span class="t" style="top:253.48px;font-size:7px;color:#b5d2ee;left:332.50px;transform-origin:0 50%;transform:scaleX(0.960);">T-Mobile D</span>
<div class="b" style="left:303.20px;top:268.61px;width:22.80px;height:23.20px;background:#e8ad2e;border-radius:1.5px 0 0 1.5px;"></div>
<div class="b" style="left:327.00px;top:268.61px;width:94.00px;height:23.20px;background:linear-gradient(#77a9d8,#5e92c7);border-radius:0 1.5px 1.5px 0;border-bottom:1px solid #5585bb;"></div>
<svg style="left:0;top:0" width="860" height="438" viewBox="0 0 860 438"><path d="M320.5 268.6 L326.0 274.1" stroke="#fff" stroke-width="1" opacity="0.9"/><g transform="translate(314.4 281.11)"><g fill="none" stroke="#fff" stroke-linecap="round"><path d="M-0.2 -2.2 L-3.1 6.3 M0.2 -2.2 L3.1 6.3" stroke-width="1.1"/><path d="M-2.9 -5.6 Q-4.6 -3 -2.9 -0.3 M2.9 -5.6 Q4.6 -3 2.9 -0.3" stroke-width="0.9"/><path d="M-4.9 -6.6 Q-7.4 -3 -4.9 0.8 M4.9 -6.6 Q7.4 -3 4.9 0.8" stroke-width="0.9"/></g><circle cx="0" cy="-3.2" r="1.5" fill="#fff"/></g><rect x="384.7" y="271.11" width="31" height="18.4" fill="#fff" stroke="#c9d6e4" stroke-width="0.6"/><g transform="translate(400 280.41)"><g><path d="M-4 -5.8 H4 V-2.6 H3.2 Q3 -4.9 1.1 -4.9 V4.2 Q1.1 5 2.6 5 V5.8 H-2.6 V5 Q-1.1 5 -1.1 4.2 V-4.9 Q-3 -4.9 -3.2 -2.6 H-4 Z" fill="#e10a7a"/><rect x="-4.3" y="-0.9" width="1.9" height="1.9" fill="#666"/><rect x="2.4" y="-0.9" width="1.9" height="1.9" fill="#666"/></g></g></svg>
<span class="t" style="top:272.21px;font-size:7px;color:#fff;font-weight:700;left:332.50px;transform-origin:0 50%;transform:scaleX(0.880);">115097/3</span>
<span class="t" style="top:279.81px;font-size:7px;color:#b5d2ee;left:332.50px;transform-origin:0 50%;transform:scaleX(0.960);">T-Mobile D</span>
<div class="b" style="left:303.20px;top:294.94px;width:22.80px;height:23.20px;background:#f1df3f;border-radius:1.5px 0 0 1.5px;"></div>
<div class="b" style="left:327.00px;top:294.94px;width:94.00px;height:23.20px;background:linear-gradient(#77a9d8,#5e92c7);border-radius:0 1.5px 1.5px 0;border-bottom:1px solid #5585bb;"></div>
<svg style="left:0;top:0" width="860" height="438" viewBox="0 0 860 438"><path d="M320.5 294.9 L326.0 300.4" stroke="#fff" stroke-width="1" opacity="0.9"/><g transform="translate(314.4 307.44)"><g fill="none" stroke="#fff" stroke-linecap="round"><path d="M-0.2 -2.2 L-3.1 6.3 M0.2 -2.2 L3.1 6.3" stroke-width="1.1"/><path d="M-2.9 -5.6 Q-4.6 -3 -2.9 -0.3 M2.9 -5.6 Q4.6 -3 2.9 -0.3" stroke-width="0.9"/><path d="M-4.9 -6.6 Q-7.4 -3 -4.9 0.8 M4.9 -6.6 Q7.4 -3 4.9 0.8" stroke-width="0.9"/></g><circle cx="0" cy="-3.2" r="1.5" fill="#fff"/></g><rect x="384.7" y="297.44" width="31" height="18.4" fill="#fff" stroke="#c9d6e4" stroke-width="0.6"/><g transform="translate(400 306.74)"><g><path d="M-4 -5.8 H4 V-2.6 H3.2 Q3 -4.9 1.1 -4.9 V4.2 Q1.1 5 2.6 5 V5.8 H-2.6 V5 Q-1.1 5 -1.1 4.2 V-4.9 Q-3 -4.9 -3.2 -2.6 H-4 Z" fill="#e10a7a"/><rect x="-4.3" y="-0.9" width="1.9" height="1.9" fill="#666"/><rect x="2.4" y="-0.9" width="1.9" height="1.9" fill="#666"/></g></g></svg>
<span class="t" style="top:298.54px;font-size:7px;color:#fff;font-weight:700;left:332.50px;transform-origin:0 50%;transform:scaleX(0.880);">116668/5</span>
<span class="t" style="top:306.14px;font-size:7px;color:#b5d2ee;left:332.50px;transform-origin:0 50%;transform:scaleX(0.960);">T-Mobile D</span>
<div class="b" style="left:303.20px;top:321.27px;width:22.80px;height:23.20px;background:#f1df3f;border-radius:1.5px 0 0 1.5px;"></div>
<div class="b" style="left:327.00px;top:321.27px;width:94.00px;height:23.20px;background:linear-gradient(#77a9d8,#5e92c7);border-radius:0 1.5px 1.5px 0;border-bottom:1px solid #5585bb;"></div>
<svg style="left:0;top:0" width="860" height="438" viewBox="0 0 860 438"><path d="M320.5 321.3 L326.0 326.8" stroke="#fff" stroke-width="1" opacity="0.9"/><g transform="translate(314.4 333.77)"><g fill="none" stroke="#fff" stroke-linecap="round"><path d="M-0.2 -2.2 L-3.1 6.3 M0.2 -2.2 L3.1 6.3" stroke-width="1.1"/><path d="M-2.9 -5.6 Q-4.6 -3 -2.9 -0.3 M2.9 -5.6 Q4.6 -3 2.9 -0.3" stroke-width="0.9"/><path d="M-4.9 -6.6 Q-7.4 -3 -4.9 0.8 M4.9 -6.6 Q7.4 -3 4.9 0.8" stroke-width="0.9"/></g><circle cx="0" cy="-3.2" r="1.5" fill="#fff"/></g><rect x="374.5" y="323.77" width="30.5" height="18.4" fill="#fff" stroke="#c9d6e4" stroke-width="0.6"/><g transform="translate(389.7 333.07)"><g><path d="M-4 -5.8 H4 V-2.6 H3.2 Q3 -4.9 1.1 -4.9 V4.2 Q1.1 5 2.6 5 V5.8 H-2.6 V5 Q-1.1 5 -1.1 4.2 V-4.9 Q-3 -4.9 -3.2 -2.6 H-4 Z" fill="#e10a7a"/><rect x="-4.3" y="-0.9" width="1.9" height="1.9" fill="#666"/><rect x="2.4" y="-0.9" width="1.9" height="1.9" fill="#666"/></g></g><g transform="translate(413.5 332.77)"><circle cx="0" cy="-2" r="1.9" fill="#fff"/><path d="M0 -0.5 V3.2" stroke="#fff" stroke-width="0.9"/><ellipse cx="0" cy="3.4" rx="2.2" ry="1" fill="none" stroke="#fff" stroke-width="0.7"/></g></svg>
<span class="t" style="top:324.87px;font-size:7px;color:#fff;font-weight:700;left:332.50px;transform-origin:0 50%;transform:scaleX(0.880);">M-Berg-a...</span>
<span class="t" style="top:332.47px;font-size:7px;color:#b5d2ee;left:332.50px;transform-origin:0 50%;transform:scaleX(0.960);">T-Mobile D</span>
<div class="b" style="left:303.20px;top:347.60px;width:22.80px;height:23.20px;background:#f1df3f;border-radius:1.5px 0 0 1.5px;"></div>
<div class="b" style="left:327.00px;top:347.60px;width:94.00px;height:23.20px;background:linear-gradient(#77a9d8,#5e92c7);border-radius:0 1.5px 1.5px 0;border-bottom:1px solid #5585bb;"></div>
<svg style="left:0;top:0" width="860" height="438" viewBox="0 0 860 438"><path d="M320.5 347.6 L326.0 353.1" stroke="#fff" stroke-width="1" opacity="0.9"/><g transform="translate(314.4 360.10)"><g fill="none" stroke="#fff" stroke-linecap="round"><path d="M-0.2 -2.2 L-3.1 6.3 M0.2 -2.2 L3.1 6.3" stroke-width="1.1"/><path d="M-2.9 -5.6 Q-4.6 -3 -2.9 -0.3 M2.9 -5.6 Q4.6 -3 2.9 -0.3" stroke-width="0.9"/><path d="M-4.9 -6.6 Q-7.4 -3 -4.9 0.8 M4.9 -6.6 Q7.4 -3 4.9 0.8" stroke-width="0.9"/></g><circle cx="0" cy="-3.2" r="1.5" fill="#fff"/></g><rect x="374.5" y="350.10" width="30.5" height="18.4" fill="#fff" stroke="#c9d6e4" stroke-width="0.6"/><g transform="translate(389.7 359.40)"><g><path d="M-4 -5.8 H4 V-2.6 H3.2 Q3 -4.9 1.1 -4.9 V4.2 Q1.1 5 2.6 5 V5.8 H-2.6 V5 Q-1.1 5 -1.1 4.2 V-4.9 Q-3 -4.9 -3.2 -2.6 H-4 Z" fill="#e10a7a"/><rect x="-4.3" y="-0.9" width="1.9" height="1.9" fill="#666"/><rect x="2.4" y="-0.9" width="1.9" height="1.9" fill="#666"/></g></g><g transform="translate(413.5 359.10)"><circle cx="0" cy="-2" r="1.9" fill="#fff"/><path d="M0 -0.5 V3.2" stroke="#fff" stroke-width="0.9"/><ellipse cx="0" cy="3.4" rx="2.2" ry="1" fill="none" stroke="#fff" stroke-width="0.7"/></g></svg>
<span class="t" style="top:351.20px;font-size:7px;color:#fff;font-weight:700;left:332.50px;transform-origin:0 50%;transform:scaleX(0.880);">M-Ostba...</span>
<span class="t" style="top:358.80px;font-size:7px;color:#b5d2ee;left:332.50px;transform-origin:0 50%;transform:scaleX(0.960);">T-Mobile D</span>
<div class="b" style="left:303.20px;top:373.93px;width:22.80px;height:23.20px;background:#f1df3f;border-radius:1.5px 0 0 1.5px;"></div>
<div class="b" style="left:327.00px;top:373.93px;width:94.00px;height:23.20px;background:linear-gradient(#77a9d8,#5e92c7);border-radius:0 1.5px 1.5px 0;border-bottom:1px solid #5585bb;"></div>
<svg style="left:0;top:0" width="860" height="438" viewBox="0 0 860 438"><path d="M320.5 373.9 L326.0 379.4" stroke="#fff" stroke-width="1" opacity="0.9"/><g transform="translate(314.4 386.43)"><g fill="none" stroke="#fff" stroke-linecap="round"><path d="M-0.2 -2.2 L-3.1 6.3 M0.2 -2.2 L3.1 6.3" stroke-width="1.1"/><path d="M-2.9 -5.6 Q-4.6 -3 -2.9 -0.3 M2.9 -5.6 Q4.6 -3 2.9 -0.3" stroke-width="0.9"/><path d="M-4.9 -6.6 Q-7.4 -3 -4.9 0.8 M4.9 -6.6 Q7.4 -3 4.9 0.8" stroke-width="0.9"/></g><circle cx="0" cy="-3.2" r="1.5" fill="#fff"/></g><rect x="384.7" y="376.43" width="31" height="18.4" fill="#fff" stroke="#c9d6e4" stroke-width="0.6"/><rect x="393.3" y="381.93" width="13.2" height="6.3" fill="#1d3557"/></svg>
<span class="t" style="top:380.13px;font-size:3.2px;color:#cfd8e6;left:400.00px;transform-origin:50% 50%;transform:translateX(-50%) scaleX(1.000);">Telef</span>
<span class="t" style="top:377.53px;font-size:7px;color:#fff;font-weight:700;left:332.50px;transform-origin:0 50%;transform:scaleX(0.880);">100064/13</span>
<span class="t" style="top:385.13px;font-size:7px;color:#b5d2ee;left:332.50px;transform-origin:0 50%;transform:scaleX(0.952);">Telefonica</span>
<div class="b" style="left:427.30px;top:89.00px;width:6.70px;height:58.30px;background:#e9e9e9;border:1px solid #d6d6d6;border-radius:2px;"></div>
<div class="b" style="left:303.30px;top:405.30px;width:94.70px;height:14.50px;background:linear-gradient(#77a9d8,#5e92c7);border-bottom:1px solid #4f7fb3;"></div>
<span class="t" style="top:408.00px;font-size:6.5px;color:#fff;font-weight:700;left:350.70px;transform-origin:50% 50%;transform:translateX(-50%) scaleX(0.906);">ACTIONS</span>
<div class="b" style="left:441.80px;top:62.30px;width:408.90px;height:363.30px;background:#fff;border:1px solid #dadada;border-radius:0 0 3px 3px;"></div>
<div class="b" style="left:441.80px;top:62.30px;width:408.90px;height:14.20px;background:#575757;"></div>
<div class="b" style="left:441.80px;top:62.30px;width:18.40px;height:14.20px;background:#c5214b;"></div>
<svg style="left:0;top:0" width="860" height="438" viewBox="0 0 860 438"><g transform="translate(451 70.2) scale(0.72)"><g fill="none" stroke="#fff" stroke-linecap="round"><path d="M-0.2 -2.2 L-3.1 6.3 M0.2 -2.2 L3.1 6.3" stroke-width="1.1"/><path d="M-2.9 -5.6 Q-4.6 -3 -2.9 -0.3 M2.9 -5.6 Q4.6 -3 2.9 -0.3" stroke-width="0.9"/><path d="M-4.9 -6.6 Q-7.4 -3 -4.9 0.8 M4.9 -6.6 Q7.4 -3 4.9 0.8" stroke-width="0.9"/></g><circle cx="0" cy="-3.2" r="1.5" fill="#fff"/></g></svg>
<span class="t" style="top:64.50px;font-size:7px;color:#fff;font-weight:700;left:465.50px;transform-origin:0 50%;transform:scaleX(0.908);">Cell: 24720/1</span>
<span class="t" style="top:64.50px;font-size:7px;color:#fff;font-weight:700;right:28.50px;transform-origin:100% 50%;transform:scaleX(0.874);">Last measured: 2 second(s) ago</span>
<div class="b" style="left:837.50px;top:62.30px;width:13.20px;height:14.20px;background:#606060;"></div>
<svg style="left:840px;top:65.5px" width="8" height="8" viewBox="0 0 8 8"><path d="M1.2 1.2 L6.8 6.8 M6.8 1.2 L1.2 6.8" stroke="#fff" stroke-width="1.5"/></svg>
<div class="b" style="left:442.80px;top:76.50px;width:406.90px;height:83.80px;background:#fafafa;"></div>
<svg style="left:0;top:0" width="860" height="438" viewBox="0 0 860 438">
<path d="M479 85.0 H812" stroke="#e9e9e9" stroke-width="0.7"/>
<path d="M479 95.5 H812" stroke="#e9e9e9" stroke-width="0.7"/>
<path d="M479 105.9 H812" stroke="#e9e9e9" stroke-width="0.7"/>
<path d="M479 116.3 H812" stroke="#e9e9e9" stroke-width="0.7"/>
<path d="M710 85 V127" stroke="#ececec" stroke-width="0.6"/>
<rect x="652" y="86" width="160" height="41.3" fill="#e1a9b5"/>
<path d="M479 127 L479.1 123.6 L480.3 120.4 L482.7 122.4 L485.2 120.0 L488.8 121.2 L492.5 120.7 L496.2 122.4 L498.6 121.2 L502.3 123.6 L504.7 124.8 L507.2 122.4 L510.8 121.9 L515.7 122.4 L519.4 124.4 L523.0 122.4 L526.7 119.5 L529.1 121.2 L532.8 120.0 L536.5 120.7 L540.1 119.5 L542.6 122.4 L545.5 114.6 L547.4 121.2 L551.1 118.7 L553.6 122.4 L557.2 121.2 L559.7 117.5 L562.1 121.9 L565.8 122.4 L569.4 124.8 L571.9 120.0 L574.3 123.6 L578.0 124.8 L581.6 122.4 L586.5 121.9 L592.6 120.7 L596.3 122.4 L601.2 122.9 L604.8 124.4 L608.5 120.0 L613.4 118.7 L618.3 118.0 L621.9 116.3 L624.4 115.1 L626.8 117.5 L630.5 117.0 L632.9 123.6 L635.4 119.5 L640.2 118.7 L645.1 119.5 L648.8 121.2 L650.5 120.0 L652.0 121.0 L652 127 Z" fill="#8bb5dd"/>
<path d="M652 127.3 L652.0 127.2 L652.5 104.8 L656.2 97.2 L661.2 99.8 L665.0 92.2 L672.5 90.5 L677.5 89.0 L682.5 89.8 L690.0 89.0 L692.5 92.2 L695.0 106.0 L698.8 99.8 L701.2 108.5 L703.0 96.0 L705.5 107.2 L707.5 97.2 L711.2 107.2 L713.8 113.5 L716.2 107.2 L720.0 107.2 L723.8 109.8 L726.2 98.5 L730.0 109.8 L733.8 101.0 L736.2 106.0 L740.0 99.8 L742.5 97.2 L745.0 102.2 L747.5 98.5 L751.2 98.0 L755.0 101.0 L758.8 107.2 L762.5 113.5 L765.0 114.8 L767.5 116.0 L769.5 98.5 L771.2 113.5 L775.0 107.2 L778.8 107.2 L782.5 106.0 L786.2 109.8 L788.8 116.0 L791.2 104.8 L793.8 111.0 L796.2 107.2 L800.0 113.5 L802.5 106.0 L805.5 98.5 L807.5 111.0 L810.0 103.5 L812.0 104.8 L812 127.3 Z" fill="#8ba4d0"/>
<rect x="479" y="126.9" width="333" height="5.6" fill="#a9a9a9"/>
<rect x="652" y="134" width="156.5" height="4.6" fill="#d5516b"/>
<path d="M808.8 131.2 H813.4 L815.2 133 V138.6 H808.8 Z" fill="#5f8fc6"/><rect x="810.5" y="133.4" width="3" height="3.4" fill="#fff"/><path d="M811 134.6H813 M811 135.8H813" stroke="#5f8fc6" stroke-width="0.5"/>
<rect x="818" y="132.2" width="30.8" height="6.5" rx="1" fill="#6a94c5"/>
<path d="M652 126 Q647.2 121.5 647.2 118.7 A4.8 4.8 0 1 1 656.8 118.7 Q656.8 121.5 652 126 Z" fill="#d9202e" stroke="#fff" stroke-width="0.5"/>
<circle cx="652" cy="118.6" r="2.2" fill="none" stroke="#fff" stroke-width="0.8"/><circle cx="652" cy="118.6" r="0.8" fill="#fff"/>
<text x="473.3" y="87.3" font-family="Liberation Sans, sans-serif" font-size="6.5" fill="#333" text-anchor="end" textLength="9" lengthAdjust="spacingAndGlyphs">-37</text>
<text x="473.3" y="97.8" font-family="Liberation Sans, sans-serif" font-size="6.5" fill="#333" text-anchor="end" textLength="9" lengthAdjust="spacingAndGlyphs">-45</text>
<text x="473.3" y="108.2" font-family="Liberation Sans, sans-serif" font-size="6.5" fill="#333" text-anchor="end" textLength="9" lengthAdjust="spacingAndGlyphs">-53</text>
<text x="473.3" y="118.6" font-family="Liberation Sans, sans-serif" font-size="6.5" fill="#333" text-anchor="end" textLength="9" lengthAdjust="spacingAndGlyphs">-61</text>
<text x="473.3" y="129.1" font-family="Liberation Sans, sans-serif" font-size="6.5" fill="#333" text-anchor="end" textLength="9" lengthAdjust="spacingAndGlyphs">-69</text>
<text x="818.7" y="87.8" font-family="Liberation Sans, sans-serif" font-size="6.5" fill="#333" text-anchor="start" textLength="9.3" lengthAdjust="spacingAndGlyphs">100</text>
<text x="818.7" y="98.3" font-family="Liberation Sans, sans-serif" font-size="6.5" fill="#333" text-anchor="start" textLength="6.2" lengthAdjust="spacingAndGlyphs">75</text>
<text x="818.7" y="108.8" font-family="Liberation Sans, sans-serif" font-size="6.5" fill="#333" text-anchor="start" textLength="6.2" lengthAdjust="spacingAndGlyphs">50</text>
<text x="818.7" y="119.1" font-family="Liberation Sans, sans-serif" font-size="6.5" fill="#333" text-anchor="start" textLength="6.2" lengthAdjust="spacingAndGlyphs">25</text>
<text x="818.7" y="129.6" font-family="Liberation Sans, sans-serif" font-size="6.5" fill="#333" text-anchor="start" textLength="3.1" lengthAdjust="spacingAndGlyphs">0</text>
<text x="0.0" y="0.0" font-family="Liberation Sans, sans-serif" font-size="6.5" fill="#6f664f" text-anchor="middle" transform="translate(457 105.5) rotate(-90)" textLength="36" lengthAdjust="spacingAndGlyphs">Power [dBm]</text>
<text x="0.0" y="0.0" font-family="Liberation Sans, sans-serif" font-size="6.5" fill="#333" text-anchor="middle" transform="translate(841.5 105.5) rotate(-90)" textLength="51" lengthAdjust="spacingAndGlyphs">Deviationlevel [%]</text>
<text x="479.0" y="151.8" font-family="Liberation Sans, sans-serif" font-size="6.8" fill="#777" text-anchor="start" textLength="25.5" lengthAdjust="spacingAndGlyphs">13:38:38</text>
<text x="812.0" y="152.0" font-family="Liberation Sans, sans-serif" font-size="6.8" fill="#555" text-anchor="end" textLength="25" lengthAdjust="spacingAndGlyphs">13:48:43</text>
<text x="833.4" y="137.8" font-family="Liberation Sans, sans-serif" font-size="6.6" fill="#fff" text-anchor="middle" textLength="27" lengthAdjust="spacingAndGlyphs">13:48:43</text>
<rect x="488.2" y="82.6" width="70.6" height="13" fill="#fff" stroke="#bdbdbd" stroke-width="0.8"/>
<rect x="545" y="83" width="13.4" height="12.2" fill="#e4e4e4"/><path d="M545 82.6 V95.6" stroke="#bdbdbd" stroke-width="0.7"/>
<path d="M549 87.6 H554.6 L551.8 91 Z" fill="#222"/>
<text x="494.0" y="91.4" font-family="Liberation Sans, sans-serif" font-size="6.5" fill="#222" text-anchor="start" textLength="40" lengthAdjust="spacingAndGlyphs">TSMA-100402</text>
</svg>
<svg style="left:0;top:0" width="860" height="438" viewBox="0 0 860 438"><path d="M596 160.3 C601 160.6 603.5 162 603.5 167 V170 Q603.5 173.5 607 173.5 H686 Q689.7 173.5 689.7 170 V167 C689.7 162 692 160.6 697 160.3 Z" fill="#fafafa" stroke="none"/><path d="M442.8 160.6 H596 C601 160.6 603.5 162 603.5 167 V170 Q603.5 173.5 607 173.5 H686 Q689.7 173.5 689.7 170 V167 C689.7 162 692 160.6 697 160.6 H849.7" fill="none" stroke="#dcdcdc" stroke-width="0.9"/></svg>
<svg style="left:612.5px;top:164.2px" width="7" height="5" viewBox="0 0 7 5"><path d="M1 4 L3.5 1.3 L6 4" fill="none" stroke="#333" stroke-width="1.2"/></svg>
<span class="t" style="top:162.50px;font-size:6.8px;color:#333;font-weight:700;left:623.70px;transform-origin:0 50%;transform:scaleX(0.947);">Minimize Timeline</span>
<div class="b" style="left:450.00px;top:187.40px;width:219.70px;height:19.40px;background:#f1f1f1;border:1px solid #dcdcdc;border-radius:3px;"></div>
<div class="b" style="left:450.00px;top:187.40px;width:54.00px;height:19.40px;background:#575757;border-radius:3px 0 0 3px;"></div>
<div class="b" style="left:550.40px;top:187.40px;width:0.70px;height:19.40px;background:#d5d5d5;"></div>
<div class="b" style="left:616.00px;top:187.40px;width:0.70px;height:19.40px;background:#d5d5d5;"></div>
<span class="t" style="top:193.00px;font-size:7px;color:#fff;font-weight:700;left:477.00px;transform-origin:50% 50%;transform:translateX(-50%) scaleX(0.893);">Cell details</span>
<span class="t" style="top:193.00px;font-size:7px;color:#333;font-weight:700;left:527.50px;transform-origin:50% 50%;transform:translateX(-50%) scaleX(0.857);">Reasons</span>
<span class="t" style="top:193.00px;font-size:7px;color:#333;font-weight:700;left:583.50px;transform-origin:50% 50%;transform:translateX(-50%) scaleX(0.870);">SI Message log</span>
<span class="t" style="top:193.00px;font-size:7px;color:#333;font-weight:700;left:643.00px;transform-origin:50% 50%;transform:translateX(-50%) scaleX(0.894);">Estimation</span>
<svg style="left:0;top:0" width="860" height="438" viewBox="0 0 860 438"><g transform="translate(457 223.3) scale(0.95)"><g fill="none" stroke="#333" stroke-linecap="round"><path d="M-0.2 -2.2 L-3.1 6.3 M0.2 -2.2 L3.1 6.3" stroke-width="1.1"/><path d="M-2.9 -5.6 Q-4.6 -3 -2.9 -0.3 M2.9 -5.6 Q4.6 -3 2.9 -0.3" stroke-width="0.9"/><path d="M-4.9 -6.6 Q-7.4 -3 -4.9 0.8 M4.9 -6.6 Q7.4 -3 4.9 0.8" stroke-width="0.9"/></g><circle cx="0" cy="-3.2" r="1.5" fill="#333"/></g></svg>
<div class="b" style="left:469.20px;top:214.00px;width:0.70px;height:20.00px;background:#e3e3e3;"></div>
<span class="t" style="top:215.20px;font-size:6.8px;color:#8a8a8a;left:474.80px;transform-origin:0 50%;transform:scaleX(0.950);">Global CellId</span>
<span class="t" style="top:223.50px;font-size:6.8px;color:#222;font-weight:700;left:474.80px;transform-origin:0 50%;transform:scaleX(0.988);">LTE 262/1/24720/1</span>
<span class="t" style="top:215.20px;font-size:6.8px;color:#8a8a8a;left:736.00px;transform-origin:50% 50%;transform:translateX(-50%) scaleX(0.959);">First measured</span>
<span class="t" style="top:223.50px;font-size:6.8px;color:#222;font-weight:700;left:736.30px;transform-origin:50% 50%;transform:translateX(-50%) scaleX(0.948);">29.11.2017 13:43:52</span>
<span class="t" style="top:215.20px;font-size:6.8px;color:#8a8a8a;left:807.00px;transform-origin:50% 50%;transform:translateX(-50%) scaleX(0.945);">Last measured</span>
<span class="t" style="top:223.50px;font-size:6.8px;color:#222;font-weight:700;left:807.20px;transform-origin:50% 50%;transform:translateX(-50%) scaleX(0.956);">29.11.2017 13:48:40</span>
<div class="b" style="left:450.00px;top:244.40px;width:391.80px;height:86.20px;background:#eeeeee;border:1px solid #dcdcdc;border-radius:2px;"></div>
<div class="b" style="left:450.00px;top:273.00px;width:391.80px;height:0.70px;background:#dcdcdc;"></div>
<div class="b" style="left:450.00px;top:301.30px;width:391.80px;height:0.70px;background:#dcdcdc;"></div>
<div class="b" style="left:685.00px;top:244.40px;width:0.70px;height:86.20px;background:#dcdcdc;"></div>
<div class="b" style="left:763.50px;top:244.40px;width:0.70px;height:57.10px;background:#dcdcdc;"></div>
<div class="b" style="left:567.20px;top:273.00px;width:0.70px;height:28.50px;background:#dcdcdc;"></div>
<span class="t" style="top:248.60px;font-size:6.8px;color:#8a8a8a;left:456.50px;transform-origin:0 50%;transform:scaleX(1.006);">Operator</span>
<span class="t" style="top:260.60px;font-size:6.5px;color:#333;font-weight:700;left:456.50px;transform-origin:0 50%;transform:scaleX(1.004);">T-Mobile D</span>
<span class="t" style="top:248.60px;font-size:6.8px;color:#8a8a8a;left:724.50px;transform-origin:50% 50%;transform:translateX(-50%) scaleX(0.904);">MCC</span>
<span class="t" style="top:260.60px;font-size:6.5px;color:#333;font-weight:700;left:724.50px;transform-origin:50% 50%;transform:translateX(-50%) scaleX(0.968);">262</span>
<span class="t" style="top:248.60px;font-size:6.8px;color:#8a8a8a;left:802.30px;transform-origin:50% 50%;transform:translateX(-50%) scaleX(0.936);">MNC</span>
<span class="t" style="top:260.60px;font-size:6.5px;color:#333;font-weight:700;left:802.30px;transform-origin:50% 50%;transform:translateX(-50%) scaleX(0.880);">1</span>
<span class="t" style="top:277.00px;font-size:6.8px;color:#8a8a8a;left:456.50px;transform-origin:0 50%;transform:scaleX(0.840);">RAT</span>
<span class="t" style="top:289.00px;font-size:6.5px;color:#333;font-weight:700;left:456.50px;transform-origin:0 50%;transform:scaleX(0.806);">LTE</span>
<span class="t" style="top:277.00px;font-size:6.8px;color:#8a8a8a;left:573.80px;transform-origin:0 50%;transform:scaleX(0.913);">Band</span>
<span class="t" style="top:289.00px;font-size:6.5px;color:#333;font-weight:700;left:573.80px;transform-origin:0 50%;transform:scaleX(0.984);">20 (800 MHz EDD)</span>
<span class="t" style="top:277.00px;font-size:6.8px;color:#8a8a8a;left:724.50px;transform-origin:50% 50%;transform:translateX(-50%) scaleX(0.841);">EARFCN</span>
<span class="t" style="top:289.00px;font-size:6.5px;color:#333;font-weight:700;left:724.50px;transform-origin:50% 50%;transform:translateX(-50%) scaleX(0.968);">6400</span>
<span class="t" style="top:277.00px;font-size:6.8px;color:#8a8a8a;left:802.30px;transform-origin:50% 50%;transform:translateX(-50%) scaleX(0.838);">PCI</span>
<span class="t" style="top:289.00px;font-size:6.5px;color:#333;font-weight:700;left:802.30px;transform-origin:50% 50%;transform:translateX(-50%) scaleX(1.014);">223</span>
<span class="t" style="top:305.50px;font-size:6.8px;color:#8a8a8a;left:456.50px;transform-origin:0 50%;transform:scaleX(0.955);">Center Frequency</span>
<span class="t" style="top:317.50px;font-size:6.5px;color:#333;font-weight:700;left:456.50px;transform-origin:0 50%;transform:scaleX(0.968);">816</span>
<span class="t" style="top:305.50px;font-size:6.8px;color:#8a8a8a;left:763.50px;transform-origin:50% 50%;transform:translateX(-50%) scaleX(0.992);">Bandwidth</span>
<span class="t" style="top:317.50px;font-size:6.5px;color:#333;font-weight:700;left:763.50px;transform-origin:50% 50%;transform:translateX(-50%) scaleX(0.880);">5</span>
<div class="b" style="left:450.00px;top:339.30px;width:391.80px;height:50.40px;background:#eeeeee;border:1px solid #dcdcdc;border-radius:2px;"></div>
<div class="b" style="left:700.20px;top:339.30px;width:0.70px;height:50.40px;background:#dcdcdc;"></div>
<div class="b" style="left:770.60px;top:339.30px;width:0.70px;height:50.40px;background:#dcdcdc;"></div>
<span class="t" style="top:342.60px;font-size:6.8px;color:#8a8a8a;left:456.50px;transform-origin:0 50%;transform:scaleX(0.962);">Measured by scanner(s)</span>
<span class="t" style="top:342.60px;font-size:6.8px;color:#8a8a8a;left:706.00px;transform-origin:0 50%;transform:scaleX(0.959);">First measured</span>
<span class="t" style="top:342.60px;font-size:6.8px;color:#8a8a8a;left:776.50px;transform-origin:0 50%;transform:scaleX(0.945);">Last measured</span>
<span class="t" style="top:356.50px;font-size:6.5px;color:#333;font-weight:700;left:456.50px;transform-origin:0 50%;transform:scaleX(0.980);">TSMA 100411</span>
<span class="t" style="top:356.50px;font-size:6.5px;color:#333;font-weight:700;left:706.00px;transform-origin:0 50%;transform:scaleX(0.992);">29.11.2017 13:43:52</span>
<span class="t" style="top:356.50px;font-size:6.5px;color:#333;font-weight:700;left:776.50px;transform-origin:0 50%;transform:scaleX(1.000);">29.11.2017 13:48:40</span>
<span class="t" style="top:367.10px;font-size:6.5px;color:#333;font-weight:700;left:456.50px;transform-origin:0 50%;transform:scaleX(0.972);">TSMA 100402</span>
<span class="t" style="top:367.10px;font-size:6.5px;color:#333;font-weight:700;left:706.00px;transform-origin:0 50%;transform:scaleX(0.992);">29.11.2017 13:43:56</span>
<span class="t" style="top:367.10px;font-size:6.5px;color:#333;font-weight:700;left:776.50px;transform-origin:0 50%;transform:scaleX(1.000);">29.11.2017 13:48:38</span>
<span class="t" style="top:377.70px;font-size:6.5px;color:#333;font-weight:700;left:456.50px;transform-origin:0 50%;transform:scaleX(0.972);">TSMA 100400</span>
<span class="t" style="top:377.70px;font-size:6.5px;color:#333;font-weight:700;left:706.00px;transform-origin:0 50%;transform:scaleX(0.992);">29.11.2017 13:44:25</span>
<span class="t" style="top:377.70px;font-size:6.5px;color:#333;font-weight:700;left:776.50px;transform-origin:0 50%;transform:scaleX(1.000);">29.11.2017 13:48:38</span>
<div class="b" style="left:450.00px;top:398.30px;width:391.80px;height:0.70px;background:#e0e0e0;"></div>
<span class="t" style="top:408.00px;font-size:6.8px;color:#333;font-weight:700;left:450.30px;transform-origin:0 50%;transform:scaleX(0.902);">Actions</span>
<div class="b" style="left:478.50px;top:405.20px;width:94.10px;height:14.60px;background:linear-gradient(#77a9d8,#5e92c7);border-bottom:1px solid #4f7fb3;"></div>
<span class="t" style="top:408.00px;font-size:6.5px;color:#fff;font-weight:700;left:525.55px;transform-origin:50% 50%;transform:translateX(-50%) scaleX(0.897);">Check</span>
<div class="b" style="left:579.00px;top:405.20px;width:93.70px;height:14.60px;background:linear-gradient(#77a9d8,#5e92c7);border-bottom:1px solid #4f7fb3;"></div>
<span class="t" style="top:408.00px;font-size:6.5px;color:#fff;font-weight:700;left:625.85px;transform-origin:50% 50%;transform:translateX(-50%) scaleX(0.914);">Good</span>
<div class="b" style="left:679.30px;top:405.20px;width:93.90px;height:14.60px;background:linear-gradient(#77a9d8,#5e92c7);border-bottom:1px solid #4f7fb3;"></div>
<span class="t" style="top:408.00px;font-size:6.5px;color:#fff;font-weight:700;left:726.25px;transform-origin:50% 50%;transform:translateX(-50%) scaleX(0.855);">Bad</span>
</body></html>
